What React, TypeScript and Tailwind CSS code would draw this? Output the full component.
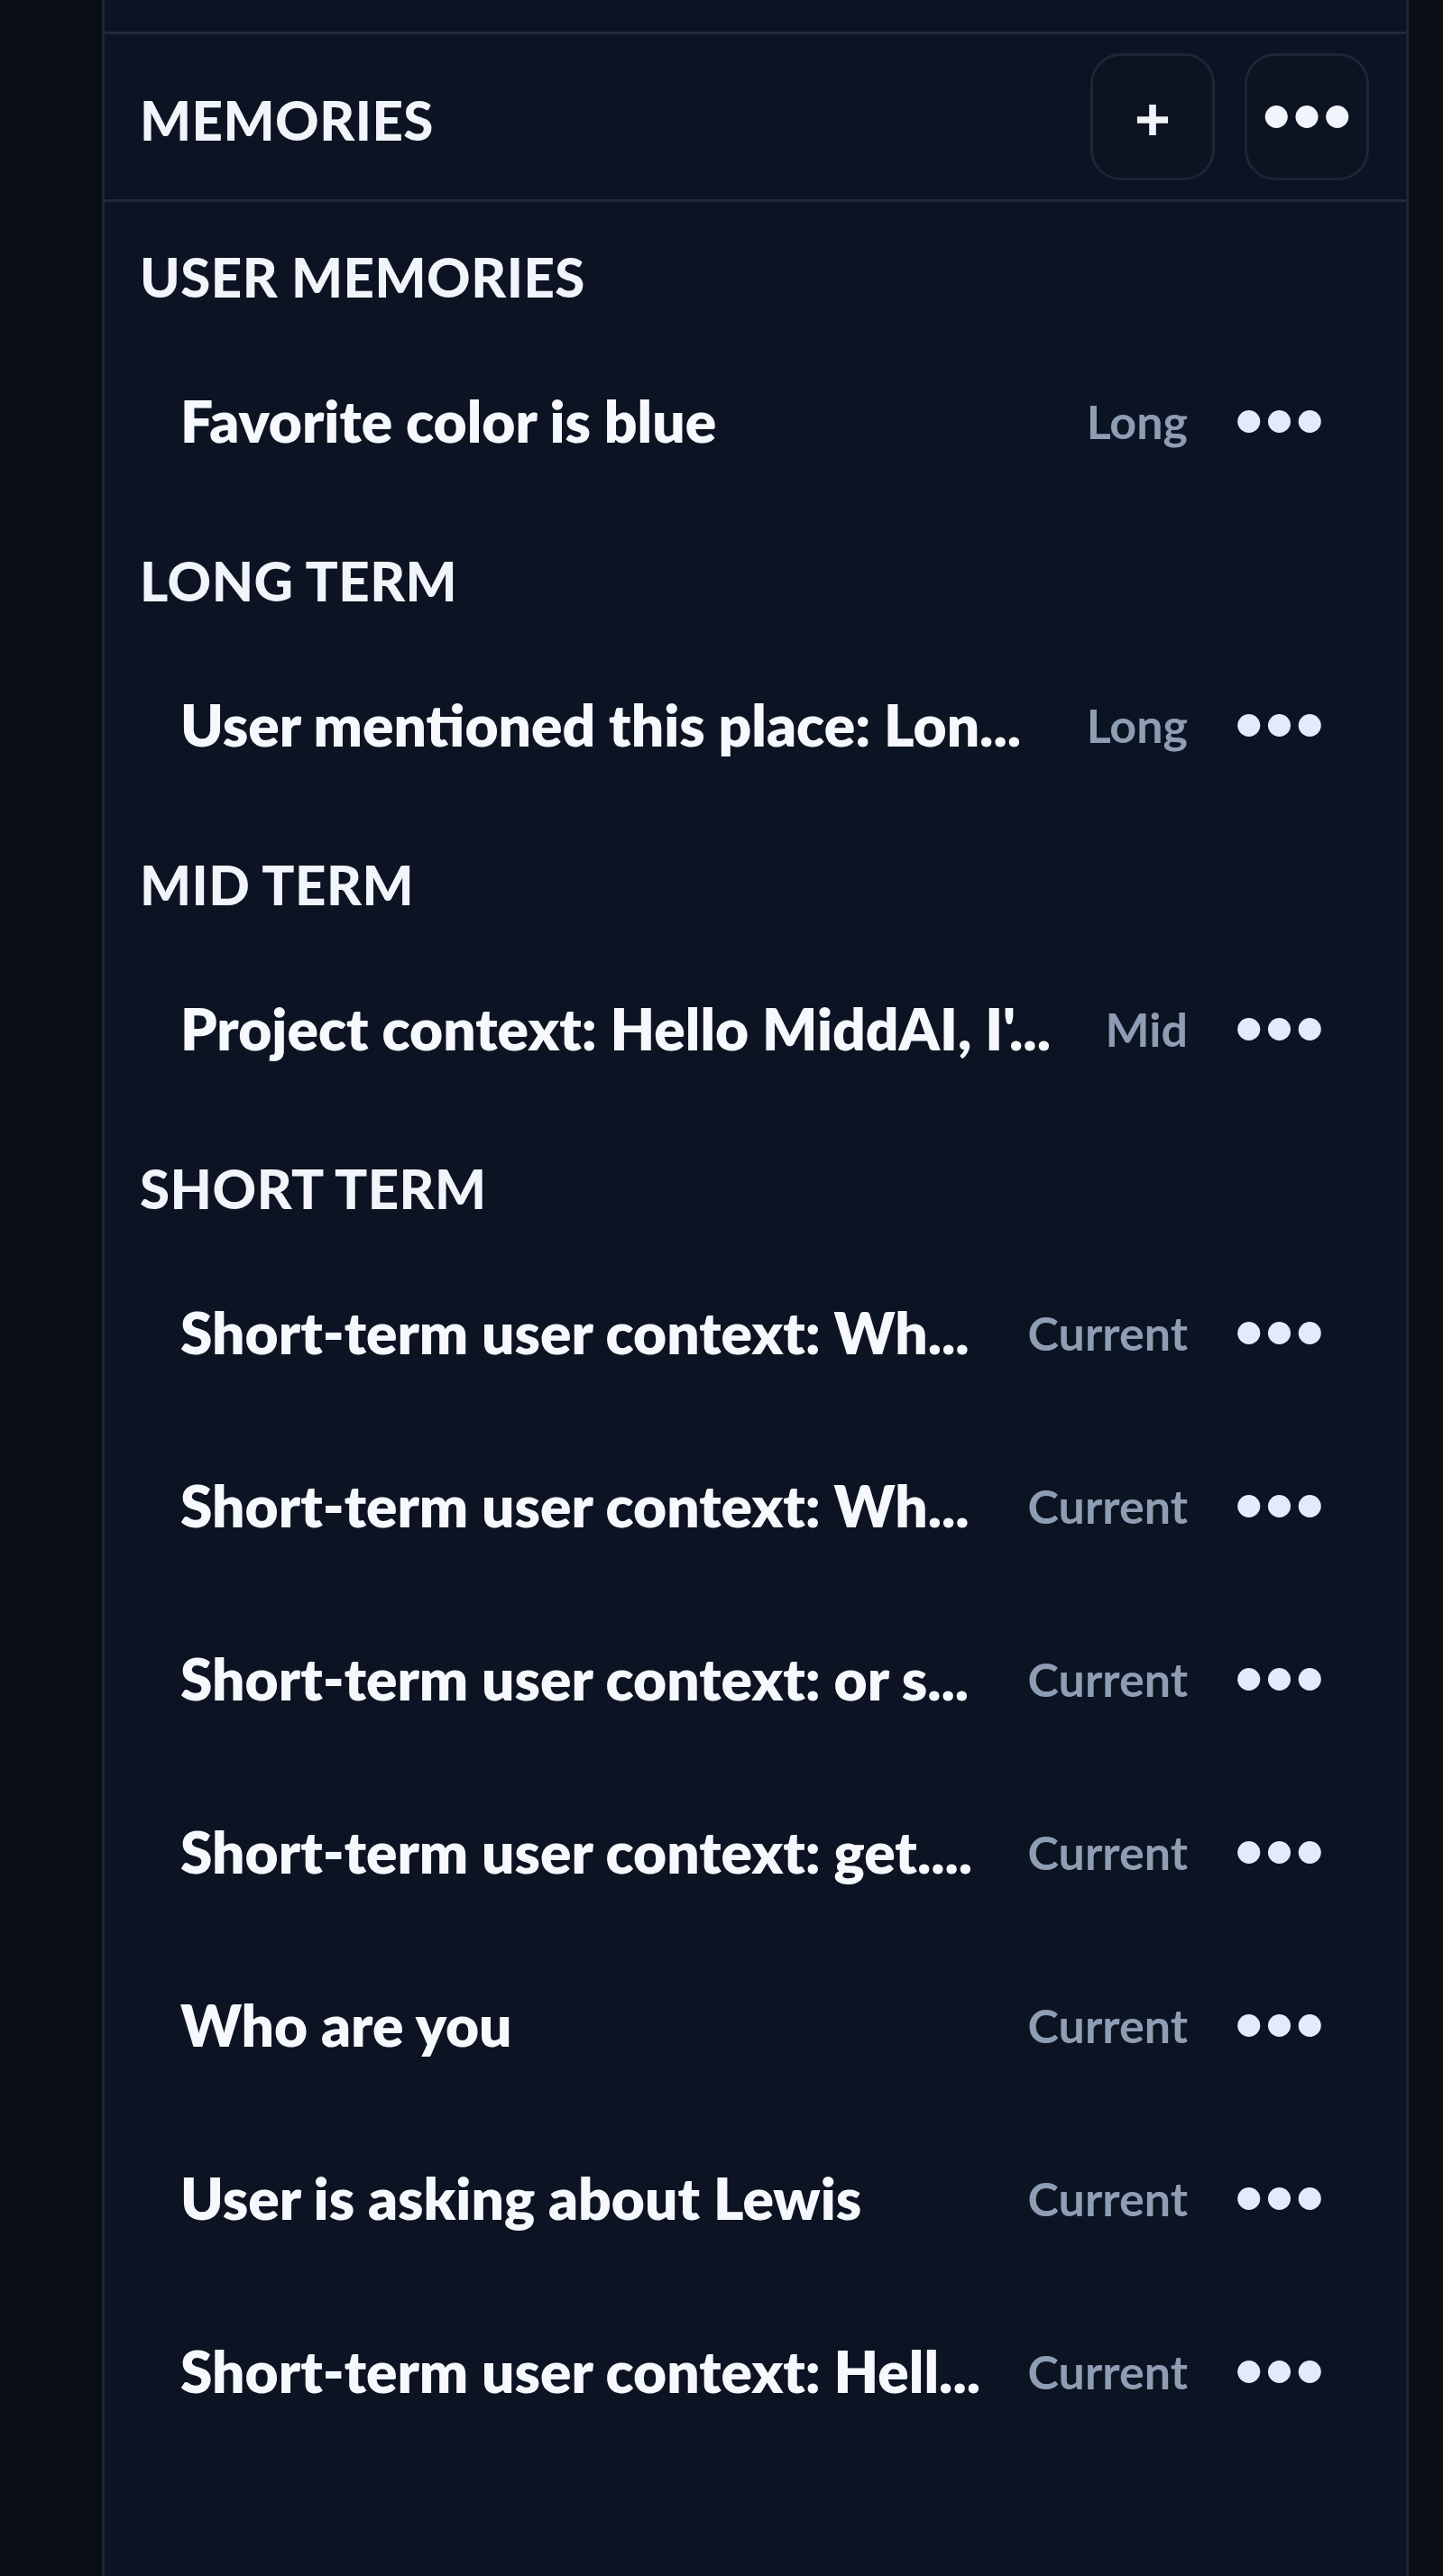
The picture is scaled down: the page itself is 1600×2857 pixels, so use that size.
import React from "react";

type Memory = { text: string; badge: string };

const sections: { title: string; items: Memory[] }[] = [
    { title: "User Memories", items: [{ text: "Favorite color is blue", badge: "Long" }] },
    { title: "Long Term", items: [{ text: "User mentioned this place: Lon...", badge: "Long" }] },
    { title: "Mid Term", items: [{ text: "Project context: Hello MiddAI, I'...", badge: "Mid" }] },
    {
        title: "Short Term",
        items: [
            { text: "Short-term user context: Wh...", badge: "Current" },
            { text: "Short-term user context: Wh...", badge: "Current" },
            { text: "Short-term user context: or s...", badge: "Current" },
            { text: "Short-term user context: get....", badge: "Current" },
            { text: "Who are you", badge: "Current" },
            { text: "User is asking about Lewis", badge: "Current" },
            { text: "Short-term user context: Hell...", badge: "Current" },
        ],
    },
];

function Dots({ className = "" }: { className?: string }) {
    return (
        <svg viewBox="0 0 98 28" className={className} fill="currentColor">
            <circle cx="14" cy="14" r="13" />
            <circle cx="49" cy="14" r="13" />
            <circle cx="84" cy="14" r="13" />
        </svg>
    );
}

function MemoryRow({ item }: { item: Memory }) {
    return (
        <div className="flex h-[192px] items-center pl-[45px] pr-[53px]">
            <span className="min-w-0 flex-1 whitespace-nowrap text-[64px] font-extrabold leading-[84px] text-[#f5f8fc]">
                {item.text}
            </span>
            <span className="ml-6 text-[52px] font-bold leading-[70px] text-[#8e9db3]">{item.badge}</span>
            <button className="ml-[53px] flex items-center text-[#e3ebfb]">
                <Dots className="h-[27px] w-[97px]" />
            </button>
        </div>
    );
}

export default function App() {
    return (
        <div
            className="flex h-[2857px] w-[1600px] bg-[#0a0f15]"
            style={{ fontFamily: "Lato, 'Open Sans', sans-serif" }}
        >
            <div className="ml-[113px] flex w-[1449px] flex-col border-x-[3px] border-[#1b2636] bg-[#0c1322]">
                <div className="h-[38px] shrink-0 border-b-[3px] border-[#1f2b3d]" />

                {/* header */}
                <div className="flex h-[186px] shrink-0 items-center justify-between border-b-[3px] border-[#1f2b3d] pl-[39px] pr-[41px]">
                    <h2 className="pt-[6px] text-[60px] font-black uppercase leading-none tracking-[0.5px] text-[#f1f5fb]">
                        Memories
                    </h2>
                    <div className="flex gap-[33px]">
                        <button className="flex h-[141px] w-[138px] items-center justify-center rounded-[34px] border-[3px] border-[#1b2637] bg-[#0c1321] text-[#f1f5fb]">
                            <svg viewBox="0 0 40 40" className="mt-[6px] h-[38px] w-[40px]" stroke="currentColor" strokeWidth="8">
                                <path d="M20 2v36M2 20h36" />
                            </svg>
                        </button>
                        <button className="flex h-[141px] w-[138px] items-center justify-center rounded-[34px] border-[3px] border-[#1b2637] bg-[#0c1321] text-[#f1f5fb]">
                            <Dots className="h-[27px] w-[96px]" />
                        </button>
                    </div>
                </div>

                {/* lists */}
                <div className="flex flex-col gap-[57px] px-[39px] pt-[59px]">
                    {sections.map((s) => (
                        <section key={s.title}>
                            <h3 className="mb-[40px] h-[48px] text-[60px] font-black uppercase leading-[48px] tracking-[0.5px] text-[#f1f5fb]">
                                {s.title}
                            </h3>
                            <div className="flex flex-col">
                                {s.items.map((item, i) => (
                                    <MemoryRow key={i} item={item} />
                                ))}
                            </div>
                        </section>
                    ))}
                </div>
            </div>
        </div>
    );
}
